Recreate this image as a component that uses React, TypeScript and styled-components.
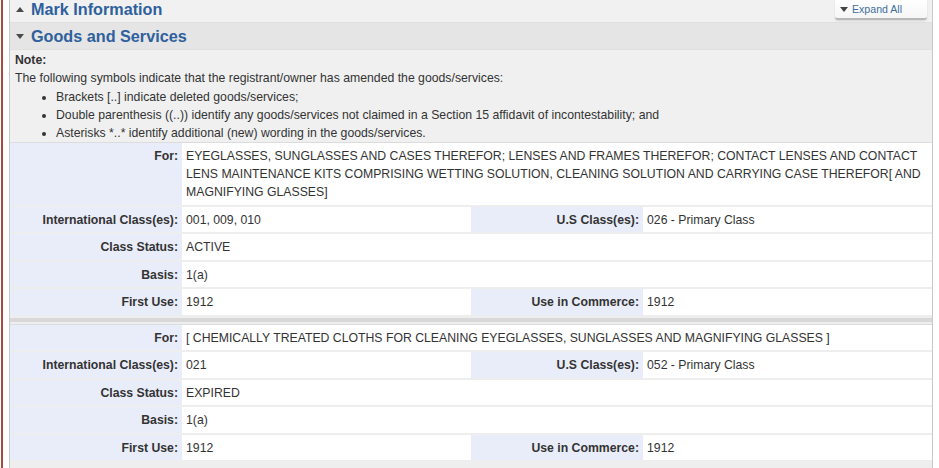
import * as React from 'react';
import styled, { createGlobalStyle } from 'styled-components';

const GlobalStyle = createGlobalStyle`
    html, body {
        margin: 0;
        padding: 0;
        background: #ffffff;
    }
    body {
        font-family: "Liberation Sans", Arial, sans-serif;
        font-size: 12.25px;
        color: #333333;
        overflow: hidden;
    }
`;

const Page = styled.div`
    margin-left: 1px;
    border-left: 2px solid #a9493d;
    padding: 0 6px 0 6px;
    min-height: 468px;
`;

const Panel = styled.div`
    border-left: 1px solid #c9c9c9;
    border-right: 1px solid #c9c9c9;
    background: #eeeeee;
    min-height: 468px;
`;

const Header = styled.div<{ $shade: string; $height: number; $lift?: number }>`
    display: flex;
    align-items: center;
    height: ${(p) => p.$height}px;
    padding: 0 0 ${(p) => p.$lift ?? 0}px 6px;
    box-sizing: border-box;
    background: ${(p) => p.$shade};
    border-bottom: 1px solid #e0e0e0;
`;

const Arrow = styled.span<{ $up?: boolean }>`
    width: 0;
    height: 0;
    border-left: 4px solid transparent;
    border-right: 4px solid transparent;
    ${(p) => (p.$up ? 'border-bottom: 5px solid #4a4a4a;' : 'border-top: 5px solid #4a4a4a;')}
    margin-right: 7px;
`;

const Title = styled.h2`
    margin: 0;
    font-size: 16.2px;
    font-weight: bold;
    color: #2d609d;
    line-height: 22px;
`;

const ExpandButton = styled.button`
    margin-left: auto;
    margin-right: 5px;
    align-self: flex-start;
    width: 92px;
    height: 20px;
    display: flex;
    align-items: center;
    gap: 4px;
    padding: 0 0 0 5px;
    border: none;
    border-bottom: 2px solid #b8b8b8;
    border-radius: 0 0 3px 3px;
    background: linear-gradient(#ffffff, #f6f6f6);
    box-shadow: 0 1px 2px rgba(0, 0, 0, 0.12);
    font-family: "Liberation Sans", Arial, sans-serif;
    font-size: 10.6px;
    color: #3f6f9f;
    cursor: pointer;
`;

const SmallArrow = styled.span`
    width: 0;
    height: 0;
    border-left: 4px solid transparent;
    border-right: 4px solid transparent;
    border-top: 5px solid #444444;
`;

const Note = styled.div`
    padding: 1px 5px 0;
    line-height: 18.3px;
    background: #f0f0f0;
`;

const NoteTitle = styled.div`
    font-weight: bold;
`;

const NoteList = styled.ul`
    margin: 0;
    padding-left: 41px;
`;

const Entry = styled.div`
    display: grid;
    grid-template-columns: 172px 289px 172px 1fr;
    row-gap: 2px;
    background: #eeeeee;
    border-top: 1px solid #dcdcdc;
`;

const Label = styled.div`
    background: #e9edf9;
    font-weight: bold;
    text-align: right;
    padding: 4px 4px 3.5px;
    line-height: 18px;
`;

const Value = styled.div<{ $wide?: boolean }>`
    background: #ffffff;
    padding: 4px 4px 3.5px;
    line-height: 18px;
    ${(p) => (p.$wide ? 'grid-column: span 3;' : '')}
`;

const Divider = styled.div`
    height: 4px;
    margin: 3px 0 2px;
    background: #d8d8d8;
`;

type Good = {
    description: string;
    intl: string;
    us: string;
    status: string;
    basis: string;
    firstUse: string;
    commerce: string;
};

const goods: Good[] = [
    {
        description:
            'EYEGLASSES, SUNGLASSES AND CASES THEREFOR; LENSES AND FRAMES THEREFOR; CONTACT LENSES AND CONTACT LENS MAINTENANCE KITS COMPRISING WETTING SOLUTION, CLEANING SOLUTION AND CARRYING CASE THEREFOR[ AND MAGNIFYING GLASSES]',
        intl: '001, 009, 010',
        us: '026 - Primary Class',
        status: 'ACTIVE',
        basis: '1(a)',
        firstUse: '1912',
        commerce: '1912',
    },
    {
        description:
            '[ CHEMICALLY TREATED CLOTHS FOR CLEANING EYEGLASSES, SUNGLASSES AND MAGNIFYING GLASSES ]',
        intl: '021',
        us: '052 - Primary Class',
        status: 'EXPIRED',
        basis: '1(a)',
        firstUse: '1912',
        commerce: '1912',
    },
];

const GoodsEntry: React.FC<{ good: Good }> = ({ good }) => (
    <Entry>
        <Label>For:</Label>
        <Value $wide>{good.description}</Value>
        <Label>International Class(es):</Label>
        <Value>{good.intl}</Value>
        <Label>U.S Class(es):</Label>
        <Value>{good.us}</Value>
        <Label>Class Status:</Label>
        <Value $wide>{good.status}</Value>
        <Label>Basis:</Label>
        <Value $wide>{good.basis}</Value>
        <Label>First Use:</Label>
        <Value>{good.firstUse}</Value>
        <Label>Use in Commerce:</Label>
        <Value>{good.commerce}</Value>
    </Entry>
);

export default function App() {
    return (
        <Page>
            <GlobalStyle />
            <Panel>
                <Header $shade="#f1f1f1" $height={23} $lift={4}>
                    <Arrow $up />
                    <Title>Mark Information</Title>
                    <ExpandButton>
                        <SmallArrow />
                        Expand All
                    </ExpandButton>
                </Header>
                <Header $shade="#e5e5e5" $height={27}>
                    <Arrow />
                    <Title>Goods and Services</Title>
                </Header>
                <Note>
                    <NoteTitle>Note:</NoteTitle>
                    The following symbols indicate that the registrant/owner has amended the goods/services:
                    <NoteList>
                        <li>Brackets [..] indicate deleted goods/services;</li>
                        <li>
                            Double parenthesis ((..)) identify any goods/services not claimed in a Section 15
                            affidavit of incontestability; and
                        </li>
                        <li>Asterisks *..* identify additional (new) wording in the goods/services.</li>
                    </NoteList>
                </Note>
                {goods.map((good, i) => (
                    <React.Fragment key={i}>
                        {i > 0 && <Divider />}
                        <GoodsEntry good={good} />
                    </React.Fragment>
                ))}
            </Panel>
        </Page>
    );
}
